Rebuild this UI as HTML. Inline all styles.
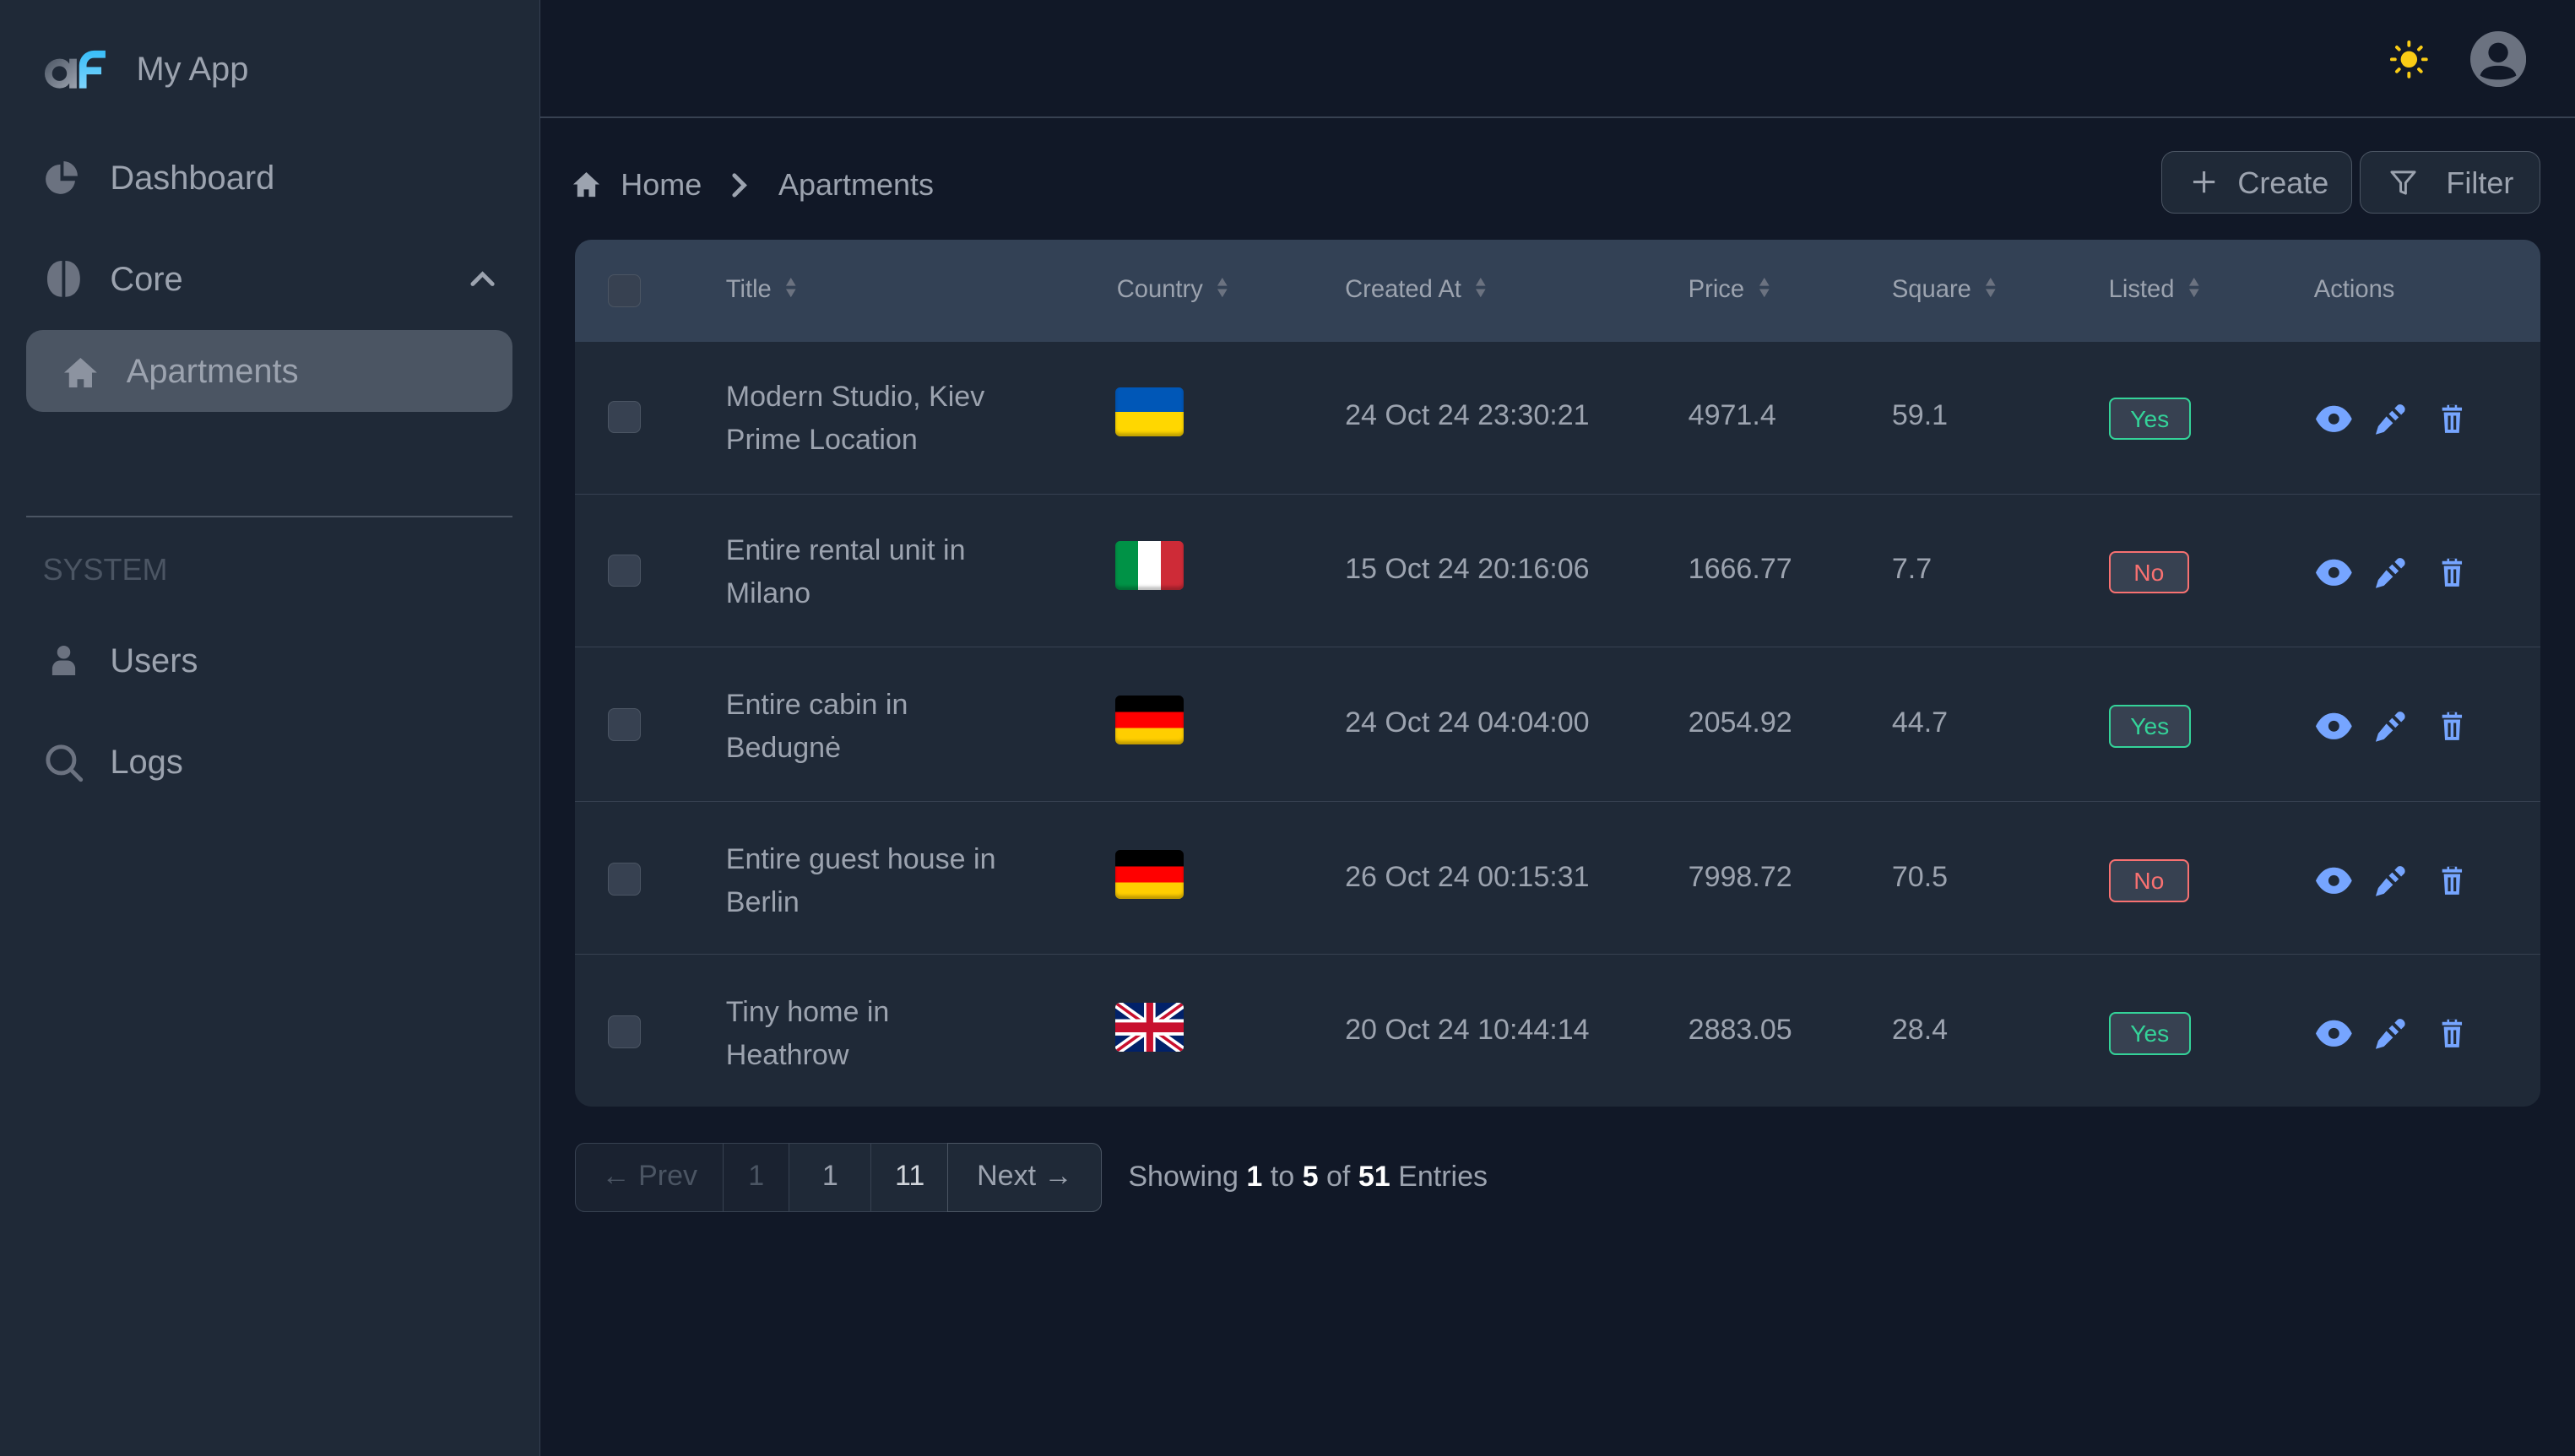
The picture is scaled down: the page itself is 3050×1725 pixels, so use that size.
<!DOCTYPE html>
<html><head><meta charset="utf-8">
<style>
*{box-sizing:border-box;margin:0;padding:0}
html{zoom:1.9452}
body{width:1568px;height:887px;background:#111827;font-family:"Liberation Sans",sans-serif;color:#9ca3af;position:relative;overflow:hidden}
.a{position:absolute;white-space:nowrap}
.sb{position:absolute;left:0;top:0;width:329px;height:887px;background:#1f2937;border-right:1px solid #374151}
.nav{font-size:20.5px;color:#9ca3af}
.tbl{position:absolute;left:350px;top:146px;width:1197px;height:528px;background:#1f2937;border-radius:10px;overflow:hidden}
.hd{position:absolute;left:0;top:0;width:100%;height:62px;background:#334155}
.th{font-size:15px;color:#9ca3af;top:22px}
.sort{display:inline-block;vertical-align:middle;margin-left:8px;width:8px;height:14px;position:relative;top:-2px}
.row{position:absolute;left:0;width:100%;height:94px;border-top:1px solid #374151}
.cb{position:absolute;left:20px;width:20px;height:20px;border:1px solid #4b5563;background:#374151;border-radius:4px}
.td{font-size:17.5px;color:#9ca3af}
.badge{position:absolute;left:934px;height:26px;border-radius:4px;background:#374151;font-size:14.5px;text-align:center;line-height:24px}
.yes{width:50px;border:1.5px solid #34d399;color:#34d399}
.no{width:49px;border:1.5px solid #f87171;color:#f87171}
.flag{position:absolute;left:329px;width:42px;height:30px;border-radius:3px;overflow:hidden;box-shadow:inset 0 -2px 2px rgba(0,0,0,.25)}
.btn{position:absolute;top:92px;height:38px;border:1px solid #4b5563;border-radius:8px;background:#1f2937;font-size:18.5px;color:#9ca3af}
.pg{position:absolute;top:696px;height:42px;border:1px solid #374151;font-size:17.5px;line-height:40px;text-align:center;background:#1f2937}
</style></head><body>
<div class="sb">
  <svg class="a" style="left:26px;top:29px" width="42" height="27" viewBox="0 0 42 27">
    <defs><linearGradient id="g1" x1="0" y1="0" x2="1" y2="1"><stop offset="0" stop-color="#4b5563"/><stop offset="1" stop-color="#9ca3af"/></linearGradient>
    <linearGradient id="g2" x1="0" y1="0" x2="0" y2="1"><stop offset="0" stop-color="#38bdf8"/><stop offset="1" stop-color="#7dd3fc"/></linearGradient></defs>
    <path d="M10 7a9 9 0 1 0 0 18a7 7 0 0 0 6-3v3h4.5V7H16v3a7 7 0 0 0-6-3zm0 4.5a4.5 4.5 0 1 1 0 9a4.5 4.5 0 0 1 0-9z" fill="url(#g1)"/>
    <path d="M22 25V11a9 9 0 0 1 9-9h7v4.5h-7a4.5 4.5 0 0 0-4.5 4.5v1h9v4.5h-9V25z" fill="url(#g2)"/>
  </svg>
  <div class="a" style="left:83px;top:31px;font-size:20.5px;color:#9ca3af">My App</div>

  <svg class="a" style="left:28px;top:97px" width="22" height="22" viewBox="0 0 22 22"><path d="M9 3a9 9 0 1 0 9 10H9z" fill="#6b7280"/><path d="M11 1a9 9 0 0 1 8.5 9H11z" fill="#6b7280"/></svg>
  <div class="a nav" style="left:67px;top:97px">Dashboard</div>

  <svg class="a" style="left:28px;top:158px" width="22" height="24" viewBox="0 0 22 24"><path d="M10 1C5 1 1 5 1 12s4 11 9 11z" fill="#6b7280"/><path d="M12 1c5 0 9 4 9 11s-4 11-9 11z" fill="#6b7280"/></svg>
  <div class="a nav" style="left:67px;top:159px">Core</div>
  <svg class="a" style="left:286px;top:164px" width="16" height="11" viewBox="0 0 16 11"><path d="M2 9l6-6 6 6" stroke="#9ca3af" stroke-width="2.5" fill="none" stroke-linecap="round"/></svg>

  <div class="a" style="left:16px;top:201px;width:296px;height:50px;background:#4b5563;border-radius:10px"></div>
  <svg class="a" style="left:38px;top:217px" width="22" height="20" viewBox="0 0 22 20"><path d="M11 1L1 10h3v9h5v-5h4v5h5v-9h3z" fill="#9ca3af" opacity=".8"/></svg>
  <div class="a nav" style="left:77px;top:215px;color:#9ca3af">Apartments</div>

  <div class="a" style="left:16px;top:314px;width:296px;height:1px;background:#4b5563"></div>
  <div class="a" style="left:26px;top:336px;font-size:18.5px;color:#4b5563">SYSTEM</div>

  <svg class="a" style="left:30px;top:392px" width="18" height="20" viewBox="0 0 18 20"><circle cx="9" cy="5" r="4" fill="#6b7280"/><path d="M2 19v-4a5 5 0 0 1 5-5h4a5 5 0 0 1 5 5v4z" fill="#6b7280"/></svg>
  <div class="a nav" style="left:67px;top:391px">Users</div>
  <svg class="a" style="left:26px;top:452px" width="26" height="26" viewBox="0 0 26 26"><circle cx="11" cy="11" r="8" stroke="#6b7280" stroke-width="2.5" fill="none"/><path d="M17 17l6 6" stroke="#6b7280" stroke-width="2.5" stroke-linecap="round"/></svg>
  <div class="a nav" style="left:67px;top:453px">Logs</div>
</div>

<div class="a" style="left:329px;top:71px;width:1239px;height:1px;background:#374151"></div>
<svg class="a" style="left:1455px;top:24px" width="24" height="24" viewBox="0 0 24 24"><circle cx="12" cy="12" r="5" fill="#facc15"/><g stroke="#facc15" stroke-width="2" stroke-linecap="round"><path d="M12 1.5v2M12 20.5v2M1.5 12h2M20.5 12h2M4.6 4.6l1.4 1.4M18 18l1.4 1.4M4.6 19.4L6 18M18 6l1.4-1.4"/></g></svg>
<svg class="a" style="left:1504px;top:19px" width="34" height="34" viewBox="0 0 34 34"><circle cx="17" cy="17" r="17" fill="#6b7280"/><circle cx="17" cy="13" r="6" fill="#111827"/><path d="M6 27c1-4 5-6 11-6s10 2 11 6c-3 2-7 2.5-11 2.5S9 29 6 27z" fill="#111827"/></svg>

<svg class="a" style="left:348px;top:104px" width="18" height="17" viewBox="0 0 18 17"><path d="M9 1L1 8.5h2.5V16h4v-4.5h3V16h4V8.5H17z" fill="#9ca3af"/></svg>
<div class="a" style="left:378px;top:102px;font-size:18.5px;color:#9ca3af">Home</div>
<svg class="a" style="left:444px;top:104px" width="12" height="18" viewBox="0 0 12 18"><path d="M3 3l6 6-6 6" stroke="#9ca3af" stroke-width="2.5" fill="none" stroke-linecap="round"/></svg>
<div class="a" style="left:474px;top:102px;font-size:18.5px;color:#9ca3af">Apartments</div>

<div class="btn" style="left:1316px;width:116px"><svg class="a" style="left:18px;top:11px" width="15" height="15" viewBox="0 0 15 15"><path d="M7.5 1v13M1 7.5h13" stroke="#9ca3af" stroke-width="1.6"/></svg><span class="a" style="left:46px;top:8px">Create</span></div>
<div class="btn" style="left:1437px;width:110px"><svg class="a" style="left:17px;top:10px" width="18" height="18" viewBox="0 0 18 18"><path d="M2 2.5h14l-5.5 6.5v6.5l-3-1.2V9z" stroke="#9ca3af" stroke-width="1.5" fill="none" stroke-linejoin="round"/></svg><span class="a" style="left:52px;top:8px">Filter</span></div>

<div class="tbl">
  <div class="hd">
    <div class="cb" style="top:21px"></div>
    <div class="a th" style="left:92px">Title<svg class="sort" viewBox="0 0 8 14"><path d="M4 1L7 6H1zM4 13L1 8h6z" fill="#6b7280"/></svg></div>
    <div class="a th" style="left:330px">Country<svg class="sort" viewBox="0 0 8 14"><path d="M4 1L7 6H1zM4 13L1 8h6z" fill="#6b7280"/></svg></div>
    <div class="a th" style="left:469px">Created At<svg class="sort" viewBox="0 0 8 14"><path d="M4 1L7 6H1zM4 13L1 8h6z" fill="#6b7280"/></svg></div>
    <div class="a th" style="left:678px">Price<svg class="sort" viewBox="0 0 8 14"><path d="M4 1L7 6H1zM4 13L1 8h6z" fill="#6b7280"/></svg></div>
    <div class="a th" style="left:802px">Square<svg class="sort" viewBox="0 0 8 14"><path d="M4 1L7 6H1zM4 13L1 8h6z" fill="#6b7280"/></svg></div>
    <div class="a th" style="left:934px">Listed<svg class="sort" viewBox="0 0 8 14"><path d="M4 1L7 6H1zM4 13L1 8h6z" fill="#6b7280"/></svg></div>
    <div class="a th" style="left:1059px">Actions</div>
  </div>

  <div class="row" style="top:62px;border-top:none">
    <div class="cb" style="top:36px"></div>
    <div class="a td" style="left:92px;top:21px;line-height:26px">Modern Studio, Kiev<br>Prime Location</div>
    <div class="flag" style="top:28px;background:linear-gradient(#0057b7 50%,#ffd700 50%)"></div>
    <div class="a td" style="left:469px;top:35px">24 Oct 24 23:30:21</div>
    <div class="a td" style="left:678px;top:35px">4971.4</div>
    <div class="a td" style="left:802px;top:35px">59.1</div>
    <div class="badge yes" style="top:34px">Yes</div>
    <svg class="a" style="left:1059px;top:35px" width="96" height="24" viewBox="0 0 96 24"><path d="M1 12C4 6 8 4 12 4s8 2 11 8c-3 6-7 8-11 8s-8-2-11-8z" fill="#76a5ff"/><circle cx="12" cy="12" r="3.3" fill="#1f2937"/><path d="M51 3.5a3 3 0 0 1 4 4l-2 2-4-4zM47.5 7l4 4-2 2-4-4zM44 10.5l4 4-5.5 5.5-5 1.5 1.5-5z" fill="#76a5ff"/><path d="M78 5h3V3.5h6V5h3v2H78zM79 8h10l-.7 12.5H79.7z" fill="#76a5ff"/><path d="M82.3 10v8.5M85.7 10v8.5" stroke="#1f2937" stroke-width="1.6"/><path d="M82.3 5V3.5h3.4V5" fill="#1f2937"/></svg>
  </div>
  <div class="row" style="top:155px">
    <div class="cb" style="top:36px"></div>
    <div class="a td" style="left:92px;top:21px;line-height:26px">Entire rental unit in<br>Milano</div>
    <div class="flag" style="top:28px;background:linear-gradient(90deg,#009246 33.3%,#fff 33.3%,#fff 66.6%,#ce2b37 66.6%)"></div>
    <div class="a td" style="left:469px;top:35px">15 Oct 24 20:16:06</div>
    <div class="a td" style="left:678px;top:35px">1666.77</div>
    <div class="a td" style="left:802px;top:35px">7.7</div>
    <div class="badge no" style="top:34px">No</div>
    <svg class="a" style="left:1059px;top:35px" width="96" height="24" viewBox="0 0 96 24"><path d="M1 12C4 6 8 4 12 4s8 2 11 8c-3 6-7 8-11 8s-8-2-11-8z" fill="#76a5ff"/><circle cx="12" cy="12" r="3.3" fill="#1f2937"/><path d="M51 3.5a3 3 0 0 1 4 4l-2 2-4-4zM47.5 7l4 4-2 2-4-4zM44 10.5l4 4-5.5 5.5-5 1.5 1.5-5z" fill="#76a5ff"/><path d="M78 5h3V3.5h6V5h3v2H78zM79 8h10l-.7 12.5H79.7z" fill="#76a5ff"/><path d="M82.3 10v8.5M85.7 10v8.5" stroke="#1f2937" stroke-width="1.6"/><path d="M82.3 5V3.5h3.4V5" fill="#1f2937"/></svg>
  </div>
  <div class="row" style="top:248px">
    <div class="cb" style="top:37px"></div>
    <div class="a td" style="left:92px;top:22px;line-height:26px">Entire cabin in<br>Bedugnė</div>
    <div class="flag" style="top:29px;background:linear-gradient(#000 33.3%,#f00 33.3%,#f00 66.6%,#ffce00 66.6%)"></div>
    <div class="a td" style="left:469px;top:36px">24 Oct 24 04:04:00</div>
    <div class="a td" style="left:678px;top:36px">2054.92</div>
    <div class="a td" style="left:802px;top:36px">44.7</div>
    <div class="badge yes" style="top:35px">Yes</div>
    <svg class="a" style="left:1059px;top:36px" width="96" height="24" viewBox="0 0 96 24"><path d="M1 12C4 6 8 4 12 4s8 2 11 8c-3 6-7 8-11 8s-8-2-11-8z" fill="#76a5ff"/><circle cx="12" cy="12" r="3.3" fill="#1f2937"/><path d="M51 3.5a3 3 0 0 1 4 4l-2 2-4-4zM47.5 7l4 4-2 2-4-4zM44 10.5l4 4-5.5 5.5-5 1.5 1.5-5z" fill="#76a5ff"/><path d="M78 5h3V3.5h6V5h3v2H78zM79 8h10l-.7 12.5H79.7z" fill="#76a5ff"/><path d="M82.3 10v8.5M85.7 10v8.5" stroke="#1f2937" stroke-width="1.6"/><path d="M82.3 5V3.5h3.4V5" fill="#1f2937"/></svg>
  </div>
  <div class="row" style="top:342px">
    <div class="cb" style="top:37px"></div>
    <div class="a td" style="left:92px;top:22px;line-height:26px">Entire guest house in<br>Berlin</div>
    <div class="flag" style="top:29px;background:linear-gradient(#000 33.3%,#f00 33.3%,#f00 66.6%,#ffce00 66.6%)"></div>
    <div class="a td" style="left:469px;top:36px">26 Oct 24 00:15:31</div>
    <div class="a td" style="left:678px;top:36px">7998.72</div>
    <div class="a td" style="left:802px;top:36px">70.5</div>
    <div class="badge no" style="top:35px">No</div>
    <svg class="a" style="left:1059px;top:36px" width="96" height="24" viewBox="0 0 96 24"><path d="M1 12C4 6 8 4 12 4s8 2 11 8c-3 6-7 8-11 8s-8-2-11-8z" fill="#76a5ff"/><circle cx="12" cy="12" r="3.3" fill="#1f2937"/><path d="M51 3.5a3 3 0 0 1 4 4l-2 2-4-4zM47.5 7l4 4-2 2-4-4zM44 10.5l4 4-5.5 5.5-5 1.5 1.5-5z" fill="#76a5ff"/><path d="M78 5h3V3.5h6V5h3v2H78zM79 8h10l-.7 12.5H79.7z" fill="#76a5ff"/><path d="M82.3 10v8.5M85.7 10v8.5" stroke="#1f2937" stroke-width="1.6"/><path d="M82.3 5V3.5h3.4V5" fill="#1f2937"/></svg>
  </div>
  <div class="row" style="top:435px">
    <div class="cb" style="top:37px"></div>
    <div class="a td" style="left:92px;top:22px;line-height:26px">Tiny home in<br>Heathrow</div>
    <svg class="flag" style="top:29px" width="42" height="30" viewBox="0 0 60 30" preserveAspectRatio="none"><rect width="60" height="30" fill="#012169"/><path d="M0 0L60 30M60 0L0 30" stroke="#fff" stroke-width="6"/><path d="M0 0L60 30M60 0L0 30" stroke="#c8102e" stroke-width="2"/><path d="M30 0v30M0 15h60" stroke="#fff" stroke-width="10"/><path d="M30 0v30M0 15h60" stroke="#c8102e" stroke-width="6"/></svg>
    <div class="a td" style="left:469px;top:36px">20 Oct 24 10:44:14</div>
    <div class="a td" style="left:678px;top:36px">2883.05</div>
    <div class="a td" style="left:802px;top:36px">28.4</div>
    <div class="badge yes" style="top:35px">Yes</div>
    <svg class="a" style="left:1059px;top:36px" width="96" height="24" viewBox="0 0 96 24"><path d="M1 12C4 6 8 4 12 4s8 2 11 8c-3 6-7 8-11 8s-8-2-11-8z" fill="#76a5ff"/><circle cx="12" cy="12" r="3.3" fill="#1f2937"/><path d="M51 3.5a3 3 0 0 1 4 4l-2 2-4-4zM47.5 7l4 4-2 2-4-4zM44 10.5l4 4-5.5 5.5-5 1.5 1.5-5z" fill="#76a5ff"/><path d="M78 5h3V3.5h6V5h3v2H78zM79 8h10l-.7 12.5H79.7z" fill="#76a5ff"/><path d="M82.3 10v8.5M85.7 10v8.5" stroke="#1f2937" stroke-width="1.6"/><path d="M82.3 5V3.5h3.4V5" fill="#1f2937"/></svg>
  </div>
</div>

<div class="pg" style="left:350px;width:91px;border-radius:6px 0 0 6px;color:#4b5563;background:#1a2230">&#8592; Prev</div>
<div class="pg" style="left:440px;width:41px;color:#4b5563;background:#1a2230">1</div>
<div class="pg" style="left:480px;width:51px">1</div>
<div class="pg" style="left:530px;width:48px;color:#d1d5db">11</div>
<div class="pg" style="left:577px;width:94px;border-radius:0 6px 6px 0;border-color:#4b5563;color:#9ca3af">Next &#8594;</div>
<div class="a" style="left:687px;top:707px;font-size:17.5px;color:#9ca3af">Showing <b style="color:#fff">1</b> to <b style="color:#fff">5</b> of <b style="color:#fff">51</b> Entries</div>
</body></html>
